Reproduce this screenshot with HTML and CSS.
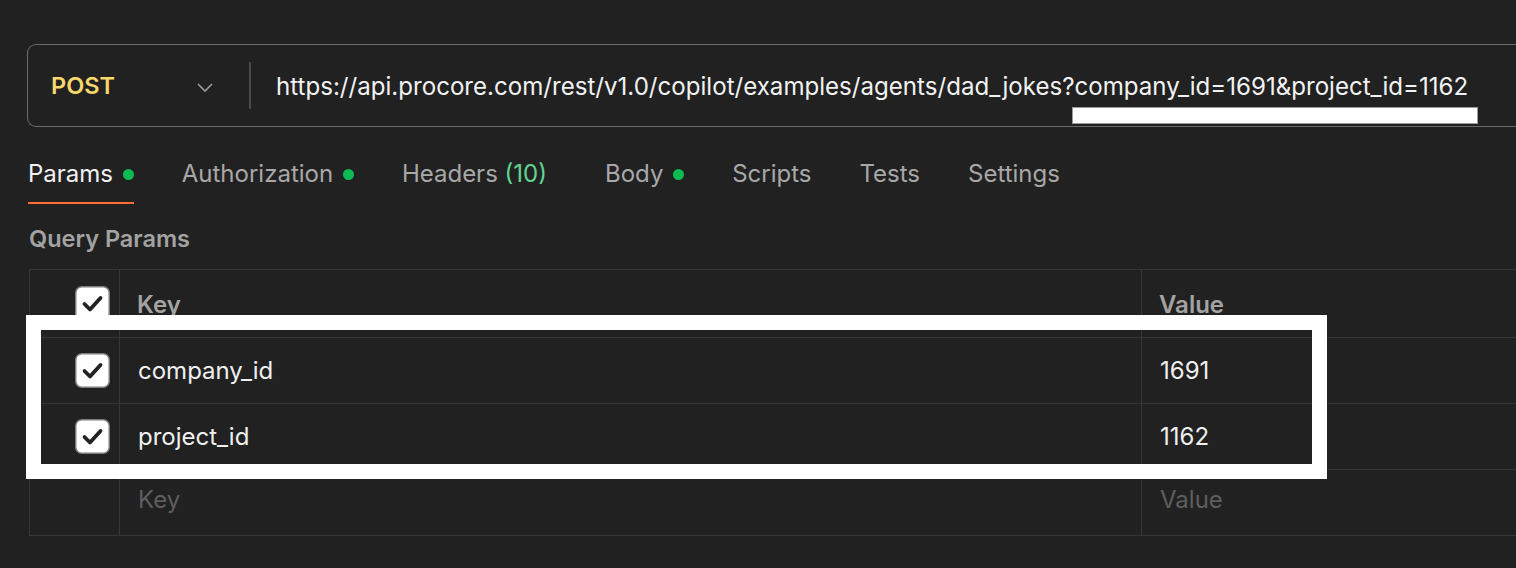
FILE: index.html
```html
<!DOCTYPE html>
<html>
<head>
<meta charset="utf-8">
<link rel="stylesheet" href="styles.css">
</head>
<body>
<div class="page">
  <div class="urlbar">
    <div class="method">
      <span class="method-name">POST</span>
      <svg class="chev" width="18" height="12" viewBox="0 0 18 12"><polyline points="2,3 9,10 16,3" fill="none" stroke="#9a9a9a" stroke-width="1.6"/></svg>
    </div>
    <div class="divider"></div>
    <div class="url">https://api.procore.com/rest/v1.0/copilot/examples/agents/dad_jokes?company_id=1691&amp;project_id=1162</div>
  </div>

  <div class="tabs">
    <div class="tab active">Params <span class="dot"></span></div>
    <div class="tab">Authorization <span class="dot"></span></div>
    <div class="tab headers">Headers <span class="count">(10)</span></div>
    <div class="tab">Body <span class="dot"></span></div>
    <div class="tab">Scripts</div>
    <div class="tab">Tests</div>
    <div class="tab">Settings</div>
  </div>

  <div class="section-title">Query Params</div>

  <table class="params">
    <colgroup><col class="c-check"><col class="c-key"><col class="c-val"></colgroup>
    <tr class="head">
      <td class="check"><svg class="cb" width="35" height="35" viewBox="0 0 35 35"><rect x="0.75" y="0.75" width="33.5" height="33.5" rx="6" fill="#fff" stroke="#7d7d7d" stroke-width="1.5"/><polyline points="9.5,18 15,23.5 25.5,12" fill="none" stroke="#222" stroke-width="3.8" stroke-linecap="round" stroke-linejoin="round"/></svg></td>
      <td class="hk">Key</td>
      <td class="hk">Value</td>
    </tr>
    <tr>
      <td class="check"><svg class="cb" width="35" height="35" viewBox="0 0 35 35"><rect x="0.75" y="0.75" width="33.5" height="33.5" rx="6" fill="#fff" stroke="#7d7d7d" stroke-width="1.5"/><polyline points="9.5,18 15,23.5 25.5,12" fill="none" stroke="#222" stroke-width="3.8" stroke-linecap="round" stroke-linejoin="round"/></svg></td>
      <td class="v">company_id</td>
      <td class="v">1691</td>
    </tr>
    <tr>
      <td class="check"><svg class="cb" width="35" height="35" viewBox="0 0 35 35"><rect x="0.75" y="0.75" width="33.5" height="33.5" rx="6" fill="#fff" stroke="#7d7d7d" stroke-width="1.5"/><polyline points="9.5,18 15,23.5 25.5,12" fill="none" stroke="#222" stroke-width="3.8" stroke-linecap="round" stroke-linejoin="round"/></svg></td>
      <td class="v">project_id</td>
      <td class="v">1162</td>
    </tr>
    <tr class="empty">
      <td class="check"></td>
      <td class="ph">Key</td>
      <td class="ph">Value</td>
    </tr>
  </table>

  <div class="mark-url"></div>
  <div class="mark-box"></div>
</div>
</body>
</html>
```
FILE: styles.css
```css
html, body {
  margin: 0;
  padding: 0;
  background: #212121;
  overflow: hidden;
}
body {
  width: 1516px;
  height: 568px;
  font-family: Inter, "Noto Sans", sans-serif;
  color: #ececec;
}
.page {
  position: relative;
  padding: 44px 0 0 27px;
}
.urlbar {
  display: flex;
  align-items: center;
  height: 81px;
  border: 1.5px solid #6a6a6a;
  border-right: none;
  border-radius: 9px 0 0 9px;
  margin-right: -40px;
}
.method {
  display: flex;
  align-items: center;
  justify-content: space-between;
  width: 163px;
  padding-left: 23px;
  padding-right: 35px;
}
.method-name {
  color: #f8d86b;
  font-weight: 600;
  font-size: 23.5px;
}
.chev { display: block; margin-top: 2px; }
.divider {
  width: 2px;
  height: 47px;
  background: #4a4a4a;
}
.url {
  padding-left: 25px;
  padding-top: 2px;
  font-size: 24.1px;
  white-space: nowrap;
  color: #f2f2f2;
}
.tabs {
  display: flex;
  margin-top: 17px;
  padding-left: 1px;
  gap: 48px;
}
.tab {
  display: flex;
  align-items: center;
  font-size: 24px;
  line-height: 30px;
  padding: 15px 0 13px;
  border-bottom: 2px solid transparent;
  color: #a8a8a8;
  white-space: pre;
}
.tab.active {
  color: #f2f2f2;
  border-bottom-color: #ff6c37;
}
.tab.headers { margin-right: 10px; }
.dot {
  display: inline-block;
  width: 11px;
  height: 11px;
  border-radius: 50%;
  background: #0cbb52;
  margin-left: 3px;
}
.count { color: #5fd493; }
.section-title {
  margin-top: 20px;
  padding-left: 2px;
  font-size: 23.5px;
  line-height: 30px;
  font-weight: 600;
  color: #a3a3a3;
}
.params {
  margin-top: 15px;
  margin-left: 2px;
  border-collapse: collapse;
  width: 1600px;
  table-layout: fixed;
}
.c-check { width: 90px; }
.c-key { width: 1022px; }
.params td {
  border: 1.5px solid #363636;
  height: 65px;
  padding: 0;
  font-size: 24px;
}
.params td.check {
  text-align: right;
  padding-right: 9px;
}
.cb { display: inline-block; vertical-align: middle; }
.params td.hk {
  padding-left: 17px;
  padding-top: 2px;
  font-weight: 600;
  color: #a3a3a3;
}
.params td.v {
  padding-left: 18px;
  color: #f0f0f0;
}
.params .empty td {
  height: 59px;
  padding-bottom: 6px;
}
.params td.ph {
  padding-left: 18px;
  color: #5e5e5e;
}
.mark-url {
  position: absolute;
  left: 1072px;
  top: 107px;
  width: 404px;
  height: 15px;
  background: #fff;
  border: 1px solid #9a9a9a;
}
.mark-box {
  position: absolute;
  left: 26px;
  top: 315px;
  width: 1301px;
  height: 164px;
  box-sizing: border-box;
  border: 15px solid #fff;
}
```
